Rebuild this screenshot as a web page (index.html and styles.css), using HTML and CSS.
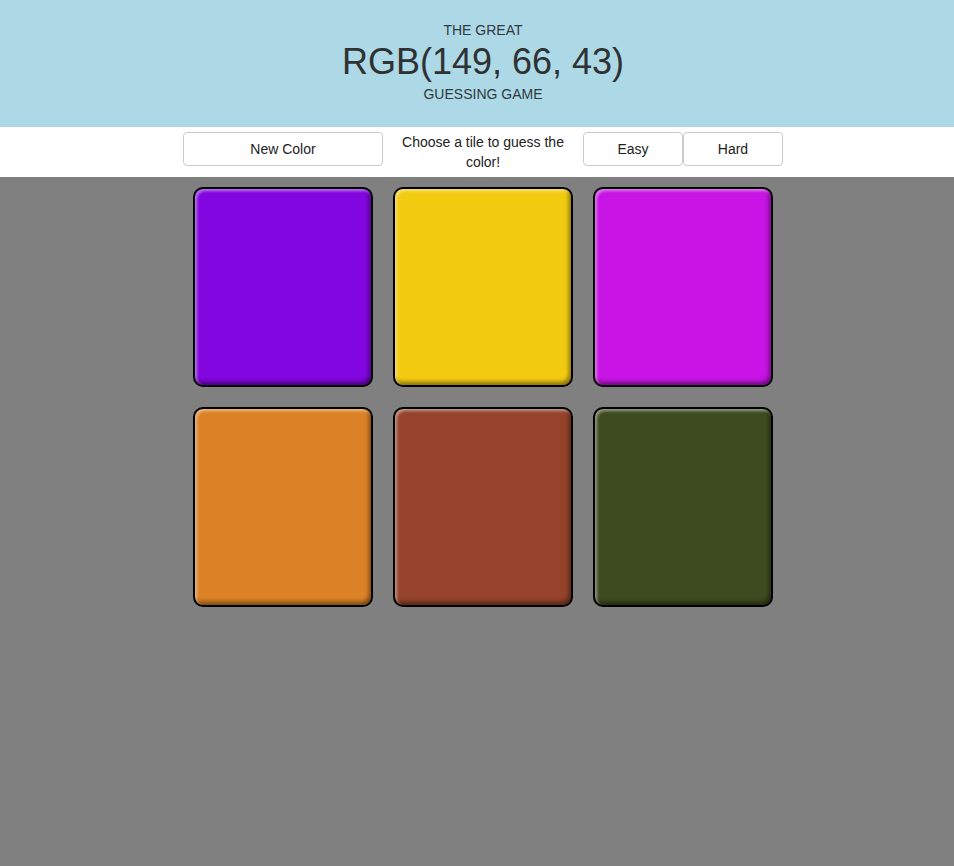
FILE: index.html
```html
<!DOCTYPE html>
<html>
<head>
<meta charset="utf-8">
<link rel="stylesheet" href="styles.css">
</head>
<body>
<header class="header">
  <h1 class="title">
    <span class="title-small">THE GREAT</span>
    <span class="title-rgb">RGB(149, 66, 43)</span>
    <span class="title-small">GUESSING GAME</span>
  </h1>
</header>
<nav class="bar">
  <div class="bar-inner">
    <button class="btn btn-wide">New Color</button>
    <span class="message">Choose a tile to guess the color!</span>
    <button class="btn btn-mode">Easy</button>
    <button class="btn btn-mode">Hard</button>
  </div>
</nav>
<main class="board">
  <div class="grid">
    <div class="tile t-purple"></div>
    <div class="tile t-yellow"></div>
    <div class="tile t-magenta"></div>
    <div class="tile t-orange"></div>
    <div class="tile t-brown"></div>
    <div class="tile t-olive"></div>
  </div>
</main>
</body>
</html>
```
FILE: styles.css
```css
html, body {
  margin: 0;
  padding: 0;
  background: #808080;
  font-family: "Liberation Sans", Arial, sans-serif;
  color: #333;
  min-height: 100%;
}
.header {
  background: #add8e6;
  padding: 20px 0 23px 12px;
  text-align: center;
}
.title {
  margin: 0;
  font-weight: normal;
}
.title-small {
  display: block;
  font-size: 14px;
  line-height: 20px;
  color: #2f3a3e;
}
.title-rgb {
  display: block;
  font-size: 36px;
  line-height: 44px;
  color: #2f3232;
}
.bar {
  background: #fff;
  height: 50px;
  box-sizing: border-box;
  padding: 5px 0 0 12px;
  display: flex;
  justify-content: center;
  align-items: flex-start;
}
.bar-inner {
  width: 600px;
  display: flex;
  align-items: flex-start;
}
.btn {
  height: 34px;
  background: #fff;
  border: 1px solid #ccc;
  border-radius: 4px;
  font-family: "Liberation Sans", Arial, sans-serif;
  font-size: 14px;
  color: #222;
  padding: 0;
}
.btn-wide { width: 200px; }
.btn-mode { width: 100px; }
.message {
  width: 200px;
  box-sizing: border-box;
  padding: 0 10px;
  text-align: center;
  font-size: 14px;
  line-height: 20px;
  color: #222;
}
.board {
  padding-left: 12px;
  display: flex;
  justify-content: center;
}
.grid {
  width: 600px;
  display: flex;
  flex-wrap: wrap;
}
.tile {
  width: 180px;
  height: 200px;
  margin: 10px;
  box-sizing: border-box;
  border: 2px solid #000;
  border-radius: 10px;
  box-shadow: inset 2px 2px 3px rgba(255,255,255,0.45), inset -2px -3px 4px rgba(0,0,0,0.45);
}
.t-purple { background: #8206e0; }
.t-yellow { background: #f2cb11; }
.t-magenta { background: #c814e4; }
.t-orange { background: #db8226; }
.t-brown { background: #95432b; }
.t-olive { background: #3e4b20; }
```
